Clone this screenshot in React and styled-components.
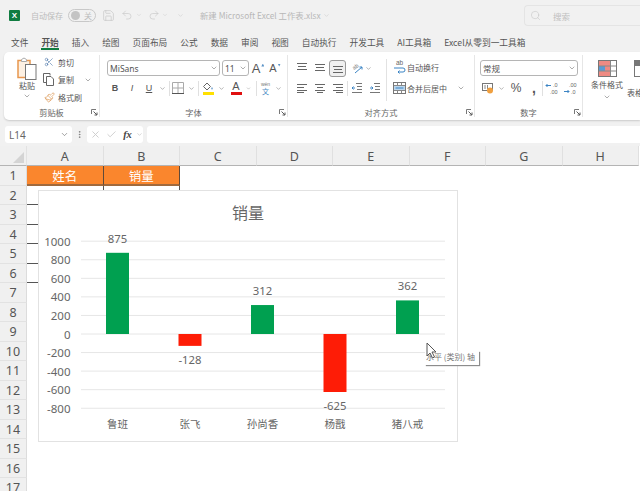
import React from "react";
import styled, { createGlobalStyle } from "styled-components";
import { Search, Save, Undo2, Redo2, ChevronDown, Scissors, Paintbrush, X, Check, MoreVertical } from "lucide-react";

const GlobalStyle = createGlobalStyle`
  html, body {
    margin: 0;
    padding: 0;
    height: 100%;
    overflow: hidden;
    background: #fff;
  }
  body {
    font-family: "Noto Sans CJK SC", "Noto Sans", sans-serif;
  }
`;

const Page = styled.div`
  position: relative;
  width: 640px;
  height: 491px;
  overflow: hidden;
  display: flex;
  flex-direction: column;
  background: #f1f1f1;
  color: #555;
`;

const TitleBar = styled.div`
  position: relative;
  height: 33px;
  display: flex;
  align-items: center;
  padding: 0 0 3px 9px;
  box-sizing: border-box;
  flex-shrink: 0;
  color: #bcbcbc;
  font-size: 8px;
`;

const Logo = styled.div`
  width: 11px;
  height: 11px;
  background: #107c41;
  border-radius: 1px;
  color: #fff;
  font: bold 8px/11px "Liberation Sans", sans-serif;
  text-align: center;
  margin-right: 11px;
`;

const Toggle = styled.div`
  width: 28px;
  height: 13px;
  margin-left: 5px;
  border: 1px solid #c8c8c8;
  border-radius: 8px;
  display: flex;
  align-items: center;
  justify-content: space-between;
  padding: 0 3px 0 2px;
  font-size: 8px;
  box-sizing: border-box;
  &::before {
    content: "";
    width: 9px;
    height: 9px;
    border-radius: 50%;
    background: #c4c4c4;
  }
`;

const TitleText = styled.span`
  margin: 0 2px 0 8px;
  color: #b8b8b8;
  font-size: 8.4px;
  white-space: nowrap;
`;

const SearchBox = styled.div`
  position: absolute;
  left: 524px;
  top: 5px;
  width: 116px;
  height: 21px;
  border: 1px solid #e4e4e4;
  border-right: 0;
  border-radius: 4px 0 0 4px;
  display: flex;
  align-items: center;
  gap: 12px;
  padding-left: 5px;
  box-sizing: border-box;
  color: #c0c0c0;
  font-size: 8.5px;
`;

const TabRow = styled.div`
  height: 19px;
  display: flex;
  align-items: center;
  padding-left: 11px;
  gap: 13px;
  flex-shrink: 0;
  font-size: 8.7px;
  line-height: 12px;
  color: #555;
  white-space: nowrap;
`;

const Tab = styled.span`
  position: relative;
  font-weight: ${(p) => (p.$active ? 700 : 400)};
  ${(p) =>
    p.$active &&
    `&::after {
      content: "";
      position: absolute;
      left: 0;
      right: 0;
      bottom: -1px;
      height: 1.5px;
      background: #107c41;
    }`}
`;

const Ribbon = styled.div`
  height: 68px;
  margin-left: 4px;
  padding: 3px 0;
  box-sizing: border-box;
  background: #fff;
  border-radius: 5px 0 0 5px;
  box-shadow: 0 1px 2px rgba(0, 0, 0, 0.16);
  display: flex;
  flex-shrink: 0;
  overflow: hidden;
`;

const Group = styled.div`
  position: relative;
  width: ${(p) => p.$w}px;
  flex-shrink: 0;
  height: 62px;
  display: flex;
  flex-direction: column;
  justify-content: space-between;
  border-right: ${(p) => (p.$last ? "0" : "1px solid #e6e6e6")};
  box-sizing: border-box;
  font-size: 8px;
  color: #555;
  white-space: nowrap;
`;

const GroupBody = styled.div`
  display: flex;
  padding: ${(p) => p.$pad || "0"};
`;

const GroupLabel = styled.div`
  text-align: center;
  font-size: 8.2px;
  line-height: 10px;
  color: #666;
`;

const LauncherBox = styled.svg`
  position: absolute;
  right: 1px;
  bottom: 1px;
`;

const PasteColumn = styled.div`
  width: ${(p) => p.$w}px;
  margin-left: ${(p) => p.$ml || 0}px;
  padding-top: ${(p) => p.$top || 0}px;
  flex-shrink: 0;
  display: flex;
  flex-direction: column;
  align-items: center;
  line-height: 10px;
  gap: ${(p) => p.$gap ?? 1}px;
`;

const Stack = styled.div`
  display: flex;
  flex-direction: column;
  gap: ${(p) => p.$gap ?? 4}px;
`;

const Row = styled.div`
  display: flex;
  align-items: center;
  height: ${(p) => p.$h || 16}px;
`;

const Slot = styled.span`
  width: ${(p) => p.$w}px;
  flex-shrink: 0;
  display: flex;
  align-items: center;
  justify-content: center;
`;

const Spacer = styled.span`
  width: ${(p) => p.$w}px;
  flex-shrink: 0;
`;

const RightPart = styled.div`
  height: 42px;
  padding-left: 5px;
  border-left: 1px solid #e2e2e2;
  display: flex;
  flex-direction: column;
  gap: 5px;
`;

const AlignPart = styled.div`
  width: 93px;
  padding-top: 1px;
  flex-shrink: 0;
`;

const Select = styled.div`
  width: ${(p) => p.$w}px;
  height: 16px;
  margin-right: ${(p) => p.$mr || 0}px;
  border: 1px solid #b5b5b5;
  border-radius: 3px;
  flex-shrink: 0;
  display: flex;
  align-items: center;
  justify-content: space-between;
  padding: 0 1px 0 2px;
  box-sizing: border-box;
  font-family: "Noto Sans", "Noto Sans CJK SC", sans-serif;
  font-size: 8.5px;
  color: #555;
`;

const BarIcon = styled.span`
  display: flex;
  flex-direction: column;
  align-items: center;
  font: 11px/9px "Liberation Sans", sans-serif;
  color: #555;
  &::after {
    content: "";
    width: 11px;
    height: 3px;
    background: ${(p) => p.$color};
    margin-top: 1px;
  }
`;

const Divider = styled.span`
  width: 1px;
  height: 15px;
  flex-shrink: 0;
  background: #e0e0e0;
`;

const Glyph = styled.span`
  font: ${(p) => (p.$bold ? 700 : 400)} ${(p) => p.$size || 9}px "Liberation Sans", sans-serif;
  font-style: ${(p) => (p.$italic ? "italic" : "normal")};
  text-decoration: ${(p) => (p.$under ? "underline" : "none")};
  color: #555;
`;

const GrowA = styled.span`
  display: flex;
  align-items: flex-start;
  font: ${(p) => p.$size}px/13px "Liberation Sans", sans-serif;
  color: #555;
  &::after {
    content: "";
    width: 3px;
    height: 3px;
    margin: 2px 0 0 1px;
    background: #5b93c7;
    clip-path: ${(p) =>
      p.$down ? "polygon(0 0, 100% 0, 50% 100%)" : "polygon(0 100%, 100% 100%, 50% 0)"};
  }
`;

const Phonetic = styled.span`
  display: flex;
  flex-direction: column;
  align-items: center;
  font-size: 7px;
  line-height: 8px;
  color: #4a8cc4;
`;

const PhoneticTop = styled.span`
  font: 5px/5px "Liberation Sans", sans-serif;
  color: #777;
`;

const Pressed = styled.span`
  width: 17px;
  height: 17px;
  border: 1px solid #9a9a9a;
  border-radius: 3px;
  background: #f0f0f0;
  box-sizing: border-box;
  display: flex;
  align-items: center;
  justify-content: center;
`;

const TableLabel = styled.span`
  margin-top: 8px;
`;

const FormulaBar = styled.div`
  height: 17px;
  margin: 6px 0 0 5px;
  display: flex;
  flex-shrink: 0;
`;

const NameBox = styled.div`
  width: 67px;
  background: #fff;
  border-radius: 3px;
  display: flex;
  align-items: center;
  justify-content: space-between;
  padding: 0 3px 0 4px;
  box-sizing: border-box;
  font: 10px "Noto Sans", sans-serif;
  color: #666;
`;

const FormulaButtons = styled.div`
  width: 56px;
  background: #fff;
  border-radius: 3px;
  display: flex;
  align-items: center;
`;

const Fx = styled.span`
  font: italic 700 10.5px "Liberation Serif", serif;
  color: #444;
`;

const FormulaInput = styled.div`
  flex: 1;
  margin-left: 4px;
  background: #fff;
  border-radius: 3px 0 0 3px;
`;

const Sheet = styled.div`
  margin-top: 3px;
  flex: 1;
  display: grid;
  grid-template-columns: 27px repeat(8, 76.5px) 1fr;
  grid-template-rows: 20px;
  grid-auto-rows: 19.5px;
  background: #fff;
  overflow: hidden;
`;

const Corner = styled.div`
  background: #f0f0f0;
  border-right: 1px solid #e2e2e2;
  border-bottom: 1px solid #b4b4b4;
  box-sizing: border-box;
  position: relative;
  &::after {
    content: "";
    position: absolute;
    right: 2px;
    bottom: 2px;
    border-style: solid;
    border-width: 0 0 11px 11px;
    border-color: transparent transparent #d4d4d4 transparent;
  }
`;

const ColHead = styled.div`
  background: #f0f0f0;
  border-right: 1px solid #e0e0e0;
  border-bottom: 1px solid #b4b4b4;
  box-sizing: border-box;
  text-align: center;
  font: 12.5px/21px "Noto Sans", sans-serif;
  color: #555;
`;

const RowHead = styled.div`
  background: #f0f0f0;
  border-right: 1px solid #dcdcdc;
  border-bottom: 1px solid #e2e2e2;
  box-sizing: border-box;
  text-align: center;
  font: 12.5px/19px "Noto Sans", sans-serif;
  color: #555;
`;

const Cell = styled.div`
  box-sizing: border-box;
  grid-column: ${(p) => p.$span || "auto"};
  border-right: ${(p) => (p.$dark ? "1px solid #555" : "0")};
  border-bottom: ${(p) => (p.$dark ? "1px solid #555" : "0")};
  font-size: 12.5px;
  line-height: 19px;
  text-align: center;
  color: #444;
`;

const HeadCell = styled.div`
  background: #fa862d;
  border-right: 1px solid #5e4a3a;
  border-bottom: 2px solid #a06a3e;
  box-sizing: border-box;
  color: #fff;
  text-align: center;
  font-size: 12.5px;
  line-height: 19px;
`;

const ChartCard = styled.div`
  position: absolute;
  left: 38px;
  top: 190px;
  width: 420px;
  height: 252px;
  background: #fff;
  border: 1px solid #e2e2e2;
  box-sizing: border-box;
`;

const Tooltip = styled.div`
  position: absolute;
  left: 425px;
  top: 351px;
  height: 14px;
  width: 54px;
  background: #fff;
  box-shadow: 1px 1px 1px #8c8c8c;
  font-size: 8px;
  line-height: 12px;
  color: #777;
  white-space: nowrap;
  padding-left: 1px;
  box-sizing: border-box;
`;

const Cursor = styled.svg`
  position: absolute;
  left: 426px;
  top: 342px;
`;

const Ic = ({ as: C, s = 11, c = "#555", w = 1.4 }) => <C size={s} color={c} strokeWidth={w} />;
const Caret = ({ s = 8, c = "#666" }) => <ChevronDown size={s} color={c} strokeWidth={1.6} />;

const Launcher = () => (
  <LauncherBox width="7" height="7" viewBox="0 0 7 7" fill="none" stroke="#777">
    <path d="M0.5 5V0.5H5" />
    <path d="M2.5 2.5L6 6M6 3.5V6H3.5" stroke="#5a5a5a" />
  </LauncherBox>
);

// rows of [x1, x2, y]
const Lines = ({ rows, c = "#666" }) => (
  <svg width="12" height="12" viewBox="0 0 12 12" stroke={c} strokeWidth="1">
    {rows.map(([a, b, y]) => (
      <line key={y} x1={a} x2={b} y1={y + 0.5} y2={y + 0.5} />
    ))}
  </svg>
);

const Indent = ({ flip }) => (
  <svg width="12" height="12" viewBox="0 0 12 12" fill="none">
    <path d="M5 1.5H11M6 4.5H11M6 7.5H11M1 10.5H11" stroke="#777" />
    <path d={flip ? "M1 6H4M2.5 4.5L4 6L2.5 7.5" : "M4 6H1M2.5 4.5L1 6L2.5 7.5"} stroke="#3b84c4" />
  </svg>
);

const OrientIcon = () => (
  <svg width="13" height="13" viewBox="0 0 13 13" fontFamily="Liberation Sans" fontSize="5.5" fill="#666">
    <text x="2" y="7" transform="rotate(-35 4 6)">ab</text>
    <path d="M4 11L11 5M11 5H8.5M11 5V7.5" fill="none" stroke="#3b84c4" />
  </svg>
);

const WrapIcon = () => (
  <svg width="13" height="14" viewBox="0 0 13 14" fontFamily="Liberation Sans" fontSize="6.5" fill="#666">
    <text x="3" y="5">ab</text>
    <path d="M1 8H10A2 2 0 0 1 10 12H5M6.5 10.5L5 12L6.5 13.5" fill="none" stroke="#3b84c4" />
  </svg>
);

const MergeIcon = () => (
  <svg width="13" height="12" viewBox="0 0 13 12" fill="none">
    <rect x="0.5" y="0.5" width="12" height="11" stroke="#777" />
    <rect x="1" y="4" width="11" height="4" fill="#bcd7ee" />
    <path d="M1 3.5H12M1 8.5H12M4.5 1V3M8.5 1V3M4.5 9V11M8.5 9V11" stroke="#888" />
    <path d="M2.5 6H10.5" stroke="#3b84c4" />
  </svg>
);

const MoneyIcon = () => (
  <svg width="12" height="11" viewBox="0 0 12 11" fill="none">
    <rect x="0.5" y="0.5" width="10" height="7" stroke="#777" />
    <path d="M3 2V6M5.5 2V6" stroke="#888" />
    <circle cx="8" cy="7.5" r="3" fill="#f0a040" />
  </svg>
);

const DecimalIcon = ({ more }) => (
  <svg width="14" height="13" viewBox="0 0 14 13" fontFamily="Liberation Sans" fontSize="5.5" fill="#666">
    <text x={more ? 6 : 8} y="5">{more ? ".00" : ".0"}</text>
    <text x={more ? 8 : 5} y="12">{more ? ".0" : ".00"}</text>
    {more ? (
      <path d="M1 9.5H6M4.5 8L6 9.5L4.5 11" fill="none" stroke="#3b84c4" />
    ) : (
      <path d="M6 3.5H1M2.5 2L1 3.5L2.5 5" fill="none" stroke="#3b84c4" />
    )}
  </svg>
);

const BorderIcon = () => (
  <svg width="12" height="12" viewBox="0 0 12 12" fill="none" stroke="#aaa">
    <path d="M0.5 0.5H11.5V11M0.5 0.5V11M6 1V11M1 6H11" />
    <path d="M0 11.5H12" stroke="#555" />
  </svg>
);

const FillIcon = () => (
  <svg width="12" height="9" viewBox="0 0 12 9" fill="none">
    <path d="M5 1L1.5 4.5L5 8L8.5 4.5Z" stroke="#666" />
    <path d="M10 5C11 6.5 11 7.5 10 7.5C9 7.5 9 6.5 10 5Z" fill="#5b93c7" />
  </svg>
);

const CopyIcon = () => (
  <svg width="12" height="13" viewBox="0 0 12 13" fill="none" stroke="#666">
    <path d="M7 2.5V0.5H0.5V9.5H3" />
    <path d="M3.5 3.5H8L10.5 6V12.5H3.5Z" />
  </svg>
);

const PasteIcon = () => (
  <svg width="20" height="23" viewBox="0 0 20 23" fill="none">
    <rect x="1" y="3.5" width="12" height="17" fill="#fdf0e2" stroke="#e8964e" strokeWidth="1.5" />
    <path d="M4.5 4.5V2.5L7 1L9.5 2.5V4.5Z" fill="#fff" stroke="#aaa" />
    <rect x="8.5" y="7.5" width="10.5" height="15" fill="#fff" stroke="#777" />
  </svg>
);

const CondIcon = () => (
  <svg width="19" height="17" viewBox="0 0 19 17">
    <rect x="0.5" y="0.5" width="18" height="16" fill="#fff" stroke="#777" />
    <rect x="1" y="1" width="11" height="5" fill="#ef8a83" />
    <rect x="1" y="6" width="6" height="5" fill="#5a9bd5" />
    <rect x="7" y="6" width="5" height="5" fill="#ef8a83" />
    <rect x="1" y="11" width="11" height="5" fill="#ef8a83" />
    <path d="M12.5 1V16M1 6H18M1 11H18" stroke="#888" fill="none" />
  </svg>
);

const TableIcon = () => (
  <svg width="19" height="17" viewBox="0 0 19 17">
    <rect x="0.5" y="0.5" width="18" height="16" fill="#fff" stroke="#777" />
    <rect x="1" y="1" width="17" height="5" fill="#777" />
  </svg>
);

const TABS = ["文件", "开始", "插入", "绘图", "页面布局", "公式", "数据", "审阅", "视图", "自动执行", "开发工具", "AI工具箱", "Excel从零到一工具箱"];
const COLS = ["A", "B", "C", "D", "E", "F", "G", "H"];
const ROWS = 17;

const DATA = [
  { name: "鲁班", value: 875, x: 117.5 },
  { name: "张飞", value: -128, x: 190 },
  { name: "孙尚香", value: 312, x: 262.5 },
  { name: "杨戬", value: -625, x: 335 },
  { name: "猪八戒", value: 362, x: 407.5 },
];

const ZERO = 334;
const SCALE = 0.0928;
const TICKS = [1000, 800, 600, 400, 200, 0, -200, -400, -600, -800];

const Chart = () => (
  <svg width="418" height="250" viewBox="39 191 418 250" fontFamily='"Noto Sans CJK SC", sans-serif'>
    <text x="248" y="218.5" textAnchor="middle" fontSize="16" fill="#666">销量</text>
    {TICKS.map((t) => {
      const y = ZERO - t * SCALE;
      return (
        <g key={t}>
          <line x1="81" x2="445" y1={y} y2={y} stroke="#e6e6e6" />
          <text x="70.5" y={y + 4.5} textAnchor="end" fontSize="11.5" fill="#666" fontFamily='"Noto Sans", sans-serif'>{t}</text>
        </g>
      );
    })}
    {DATA.map((d) => {
      const h = Math.abs(d.value) * SCALE;
      const up = d.value > 0;
      return (
        <g key={d.name}>
          <rect x={d.x - 11.5} y={up ? ZERO - h : ZERO} width="23" height={h} fill={up ? "#00a050" : "#fe1c06"} />
          <text x={d.x} y={up ? ZERO - h - 10 : ZERO + h + 18} textAnchor="middle" fontSize="11.3" fill="#666" fontFamily='"Noto Sans", sans-serif'>{d.value}</text>
          <text x={d.x} y="428" textAnchor="middle" fontSize="10.5" fill="#666">{d.name}</text>
        </g>
      );
    })}
  </svg>
);

export default function App() {
  return (
    <Page>
      <GlobalStyle />
      <TitleBar>
        <Logo>X</Logo>
        自动保存
        <Toggle>关</Toggle>
        <Slot $w={24}><Ic as={Save} s={13} c="#c4c4c4" w={1.2} /></Slot>
        <Slot $w={14}><Ic as={Undo2} s={12} c="#c4c4c4" w={1.2} /></Slot>
        <Slot $w={10}><Caret s={6} c="#c4c4c4" /></Slot>
        <Spacer $w={2} />
        <Slot $w={16}><Ic as={Redo2} s={12} c="#c4c4c4" w={1.2} /></Slot>
        <Slot $w={6}><Caret s={6} c="#c4c4c4" /></Slot>
        <Slot $w={24}><Caret s={7} c="#c4c4c4" /></Slot>
        <TitleText>新建 Microsoft Excel 工作表.xlsx</TitleText>
        <Caret s={7} c="#c4c4c4" />
        <SearchBox>
          <Search size={11} color="#c4c4c4" strokeWidth={1.2} />
          搜索
        </SearchBox>
      </TitleBar>
      <TabRow>
        {TABS.map((t) => (
          <Tab key={t} $active={t === "开始"}>{t}</Tab>
        ))}
      </TabRow>
      <Ribbon>
        <Group $w={96}>
          <GroupBody $pad="0 0 0 8px">
            <PasteColumn $w={30} $top={2}>
              <PasteIcon />
              粘贴
              <Caret />
            </PasteColumn>
            <Stack $gap={3.5}>
              <Row $h={14}><Slot $w={14}><Ic as={Scissors} s={10} c="#4a76a8" /></Slot><Spacer $w={2} />剪切</Row>
              <Row $h={14}><Slot $w={14}><CopyIcon /></Slot><Spacer $w={2} />复制<Spacer $w={10} /><Caret /></Row>
              <Row $h={14}><Slot $w={14}><Ic as={Paintbrush} s={11} c="#d9914a" /></Slot><Spacer $w={2} />格式刷</Row>
            </Stack>
          </GroupBody>
          <GroupLabel>剪贴板</GroupLabel>
          <Launcher />
        </Group>
        <Group $w={188}>
          <GroupBody $pad="5px 0 0 7px">
            <Stack>
              <Row>
                <Select $w={113} $mr={2}>MiSans<Caret /></Select>
                <Select $w={27}>11<Caret /></Select>
                <Slot $w={18}><GrowA $size={13}>A</GrowA></Slot>
                <Slot $w={16}><GrowA $size={11} $down>A</GrowA></Slot>
              </Row>
              <Row>
                <Slot $w={16}><Glyph $bold>B</Glyph></Slot>
                <Slot $w={18}><Glyph $italic>I</Glyph></Slot>
                <Slot $w={16}><Glyph $under>U</Glyph></Slot>
                <Slot $w={10}><Caret s={7} /></Slot>
                <Slot $w={4}><Divider /></Slot>
                <Slot $w={14}><BorderIcon /></Slot>
                <Slot $w={12}><Caret s={7} /></Slot>
                <Slot $w={2}><Divider /></Slot>
                <Slot $w={18}><BarIcon $color="#ffe000"><FillIcon /></BarIcon></Slot>
                <Slot $w={9}><Caret s={7} /></Slot>
                <Slot $w={20}><BarIcon $color="#e01010">A</BarIcon></Slot>
                <Slot $w={5}><Caret s={7} /></Slot>
                <Slot $w={10}><Divider /></Slot>
                <Slot $w={9}><Phonetic><PhoneticTop>wén</PhoneticTop>文</Phonetic></Slot>
                <Slot $w={16}><Caret s={7} /></Slot>
              </Row>
            </Stack>
          </GroupBody>
          <GroupLabel>字体</GroupLabel>
          <Launcher />
        </Group>
        <Group $w={187}>
          <GroupBody $pad="4px 0 0 5px">
            <AlignPart>
              <Stack>
                <Row>
                  <Slot $w={18}><Lines rows={[[1, 11, 1], [2, 10, 4], [1, 11, 7]]} /></Slot>
                  <Slot $w={18}><Lines rows={[[1, 11, 2], [2, 10, 5], [1, 11, 8]]} /></Slot>
                  <Slot $w={17}><Pressed><Lines rows={[[1, 11, 4], [2, 10, 7], [1, 11, 10]]} /></Pressed></Slot>
                  <Spacer $w={4} />
                  <Slot $w={14}><OrientIcon /></Slot>
                  <Slot $w={8}><Caret s={7} /></Slot>
                </Row>
                <Row>
                  <Slot $w={18}><Lines rows={[[1, 11, 2], [1, 8, 5], [1, 11, 8], [1, 8, 10]]} /></Slot>
                  <Slot $w={18}><Lines rows={[[1, 11, 2], [3, 9, 5], [1, 11, 8], [3, 9, 10]]} /></Slot>
                  <Slot $w={18}><Lines rows={[[1, 11, 2], [4, 11, 5], [1, 11, 8], [4, 11, 10]]} /></Slot>
                  <Divider />
                  <Slot $w={18}><Indent /></Slot>
                  <Slot $w={17}><Indent flip /></Slot>
                </Row>
              </Stack>
            </AlignPart>
            <RightPart>
              <Row><Slot $w={15}><WrapIcon /></Slot>自动换行</Row>
              <Row><Slot $w={15}><MergeIcon /></Slot>合并后居中<Spacer $w={10} /><Caret /></Row>
            </RightPart>
          </GroupBody>
          <GroupLabel>对齐方式</GroupLabel>
          <Launcher />
        </Group>
        <Group $w={108}>
          <GroupBody $pad="5px 0 0 5px">
            <Stack>
              <Select $w={98}>常规<Caret /></Select>
              <Row>
                <Slot $w={16}><MoneyIcon /></Slot>
                <Slot $w={10}><Caret s={7} /></Slot>
                <Slot $w={20}><Glyph $size={12}>%</Glyph></Slot>
                <Slot $w={16}><Glyph $size={14} $bold>,</Glyph></Slot>
                <Divider />
                <Slot $w={17}><DecimalIcon /></Slot>
                <Slot $w={19}><DecimalIcon more /></Slot>
              </Row>
            </Stack>
          </GroupBody>
          <GroupLabel>数字</GroupLabel>
          <Launcher />
        </Group>
        <Group $w={60} $last>
          <GroupBody>
            <PasteColumn $w={48} $top={5} $gap={3}>
              <CondIcon />
              条件格式
              <Caret />
            </PasteColumn>
            <PasteColumn $w={40} $ml={-8} $top={5} $gap={3}>
              <TableIcon />
              <TableLabel>表格格式</TableLabel>
            </PasteColumn>
          </GroupBody>
        </Group>
      </Ribbon>
      <FormulaBar>
        <NameBox>L14<Caret s={9} /></NameBox>
        <Slot $w={15}><MoreVertical size={9} color="#777" /></Slot>
        <FormulaButtons>
          <Slot $w={16}><X size={11} color="#ccc" /></Slot>
          <Slot $w={16}><Check size={11} color="#ccc" /></Slot>
          <Slot $w={17}><Fx>fx</Fx></Slot>
          <Slot $w={7}><Caret s={7} c="#aaa" /></Slot>
        </FormulaButtons>
        <FormulaInput />
      </FormulaBar>
      <Sheet>
        <Corner />
        {COLS.map((c) => <ColHead key={c}>{c}</ColHead>)}
        <Cell />
        {Array.from({ length: ROWS }, (_, i) => (
          <React.Fragment key={i}>
            <RowHead>{i + 1}</RowHead>
            {i === 0 && <HeadCell>姓名</HeadCell>}
            {i === 0 && <HeadCell>销量</HeadCell>}
            {i > 0 && i < 6 && <Cell $dark>{i === 1 ? "鲁班" : ""}</Cell>}
            {i > 0 && i < 6 && <Cell $dark />}
            <Cell $span={i < 6 ? "span 7" : "span 9"} />
          </React.Fragment>
        ))}
      </Sheet>
      <ChartCard><Chart /></ChartCard>
      <Tooltip>水平 (类别) 轴</Tooltip>
      <Cursor width="12" height="18" viewBox="0 0 12 18">
        <path d="M1 1 L1 14 L4 11 L6.5 16 L8.5 15 L6 10 L10 10 Z" fill="#fff" stroke="#555" strokeWidth="1" />
      </Cursor>
    </Page>
  );
}
